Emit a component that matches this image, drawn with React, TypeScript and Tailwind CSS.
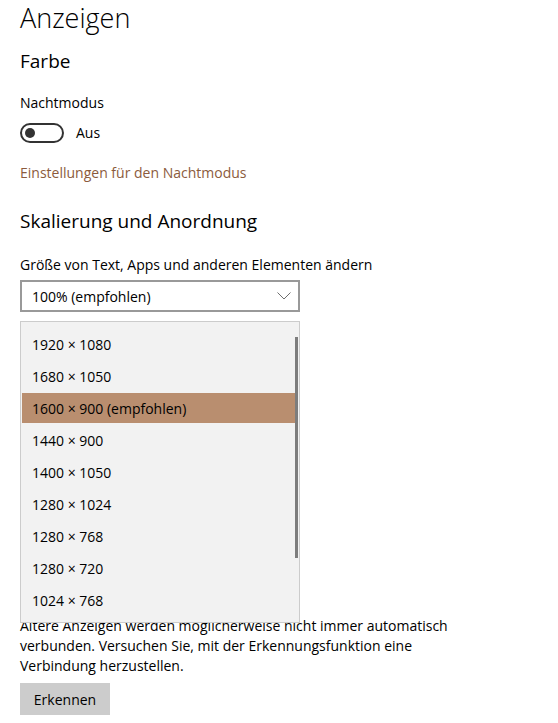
const resolutions = [
  '1920 × 1080',
  '1680 × 1050',
  '1600 × 900 (empfohlen)',
  '1440 × 900',
  '1400 × 1050',
  '1280 × 1024',
  '1280 × 768',
  '1280 × 720',
  '1024 × 768',
]

const selected = '1600 × 900 (empfohlen)'

export default function App() {
  return (
    <div className="relative min-h-[723px] bg-white px-[20px] text-black font-['Open_Sans',sans-serif]">
      <h1 className="h-[38px] text-[27px] font-light leading-[36px]">Anzeigen</h1>

      <h2 className="mt-[10px] h-[26px] text-[19px] leading-[26px]">Farbe</h2>

      <div className="mt-[19px] h-[20px] text-[14px] leading-[20px]">Nachtmodus</div>

      <div className="mt-[10px] flex h-[20px] items-center gap-[12px]">
        <div className="flex h-[20px] w-[44px] items-center rounded-full border-2 border-[#333333] pl-[3px]">
          <div className="h-[10px] w-[10px] rounded-full bg-[#333333]" />
        </div>
        <span className="text-[14px] leading-[20px]">Aus</span>
      </div>

      <div className="mt-[20px] h-[20px] text-[14px] leading-[20px] text-[#8b5b3c]">
        Einstellungen für den Nachtmodus
      </div>

      <h2 className="mt-[25px] h-[26px] text-[19px] leading-[26px]">Skalierung und Anordnung</h2>

      <div className="mt-[21px] h-[20px] text-[14px] leading-[20px]">
        Größe von Text, Apps und anderen Elementen ändern
      </div>

      <div className="mt-[5px] flex h-[32px] w-[280px] items-center justify-between border-2 border-[#999999] pl-[10px] pr-[7px] text-[14px]">
        <span>100% (empfohlen)</span>
        <svg width="14" height="8" viewBox="0 0 14 8" fill="none" stroke="#6e6e6e" strokeWidth="1">
          <path d="M0.5 0.5 L7 7 L13.5 0.5" />
        </svg>
      </div>

      {/* Platz für die Steuerelemente unter der geöffneten Liste */}
      <div className="h-[304px]" />

      <p className="text-[14px] leading-[20px]">
        Ältere Anzeigen werden möglicherweise nicht immer automatisch
        <br />
        verbunden. Versuchen Sie, mit der Erkennungsfunktion eine
        <br />
        Verbindung herzustellen.
      </p>

      <button className="mt-[7px] h-[32px] w-[90px] bg-[#cccccc] text-[14px]">Erkennen</button>

      {/* Geöffnete Auswahlliste */}
      <div className="absolute left-[20px] top-[321px] h-[302px] w-[280px] border border-[#cccccc] bg-[#f2f2f2] pt-[6px]">
        {resolutions.map((r) => (
          <div key={r} className="h-[32px] px-[1px] py-[1px]">
            <div
              className={`flex h-[30px] items-center pl-[10px] text-[14px] ${
                r === selected ? 'bg-[#b98e6f]' : ''
              }`}
            >
              {r}
            </div>
          </div>
        ))}
        <div className="absolute right-[1px] top-[15px] h-[221px] w-[3px] bg-[#7d7d7d]" />
      </div>
    </div>
  )
}
